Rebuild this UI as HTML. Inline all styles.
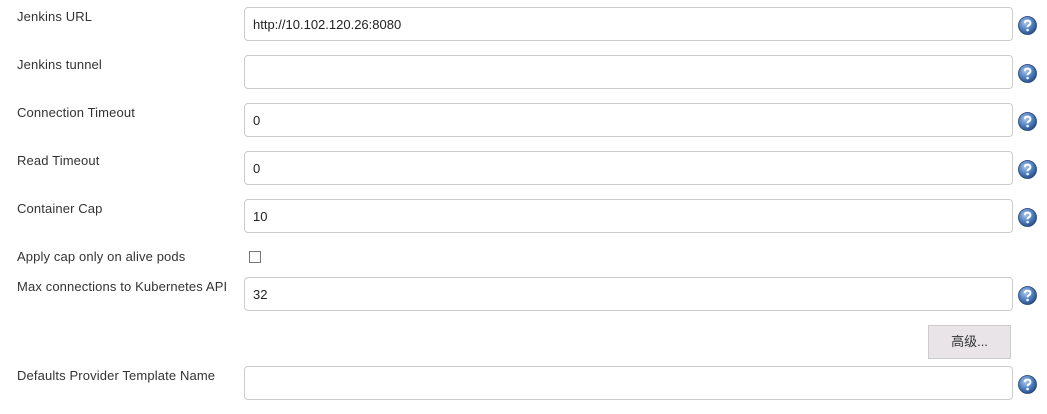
<!DOCTYPE html>
<html><head><meta charset="utf-8"><style>
body{margin:0;width:1047px;height:414px;background:#fff;position:relative;overflow:hidden;font-family:"Liberation Sans","Noto Sans CJK SC",sans-serif;font-size:13px;color:#333}
.l{position:absolute;left:17px;font-size:13px;color:#333;white-space:nowrap;letter-spacing:0.13px}
.i{position:absolute;left:244px;width:767px;height:32px;border:1px solid #ccc;border-radius:4px;box-sizing:content-box;background:#fff}
.i span{position:absolute;left:8px;top:9px;font-size:13px;color:#222}
.h{position:absolute;left:1018px;width:19px;height:19px}
.cb{position:absolute;left:249px;top:251px;width:10px;height:10px;border:1px solid #777;background:#fff}
.btn{position:absolute;left:928px;top:325px;width:81px;height:32px;background:#e8e4e8;border:1px solid #ccc;text-align:center;line-height:32px;font-size:13px;color:#333}
</style></head><body>
<svg width="0" height="0" style="position:absolute"><defs>
<radialGradient id="g" cx="40%" cy="35%" r="70%"><stop offset="0" stop-color="#a9c6ea"/><stop offset="0.6" stop-color="#4a7bbb"/><stop offset="1" stop-color="#24497f"/></radialGradient>
<symbol id="q" viewBox="0 0 19 19"><circle cx="9.5" cy="9.5" r="9" fill="url(#g)" stroke="#1f3f70" stroke-width="0.8"/><path d="M6.6 7.2 Q6.8 4.6 9.6 4.6 Q12.4 4.7 12.4 7 Q12.4 8.6 10.6 9.4 Q9.6 9.9 9.6 11.3" fill="none" stroke="#fff" stroke-width="2"/><circle cx="9.6" cy="14" r="1.3" fill="#fff"/></symbol></defs></svg>

<div class="l" style="top:9px">Jenkins URL</div>
<div class="i" style="top:7px"><span>http://10.102.120.26:8080</span></div>
<svg class="h" style="top:16px"><use href="#q"/></svg>

<div class="l" style="top:57px">Jenkins tunnel</div>
<div class="i" style="top:55px"></div>
<svg class="h" style="top:64px"><use href="#q"/></svg>

<div class="l" style="top:105px">Connection Timeout</div>
<div class="i" style="top:103px"><span>0</span></div>
<svg class="h" style="top:112px"><use href="#q"/></svg>

<div class="l" style="top:153px">Read Timeout</div>
<div class="i" style="top:151px"><span>0</span></div>
<svg class="h" style="top:160px"><use href="#q"/></svg>

<div class="l" style="top:201px">Container Cap</div>
<div class="i" style="top:199px"><span>10</span></div>
<svg class="h" style="top:208px"><use href="#q"/></svg>

<div class="l" style="top:249px">Apply cap only on alive pods</div>
<div class="cb"></div>

<div class="l" style="top:279px">Max connections to Kubernetes API</div>
<div class="i" style="top:277px"><span>32</span></div>
<svg class="h" style="top:286px"><use href="#q"/></svg>

<div class="btn">高级...</div>

<div class="l" style="top:368px">Defaults Provider Template Name</div>
<div class="i" style="top:366px"></div>
<svg class="h" style="top:375px"><use href="#q"/></svg>
</body></html>
